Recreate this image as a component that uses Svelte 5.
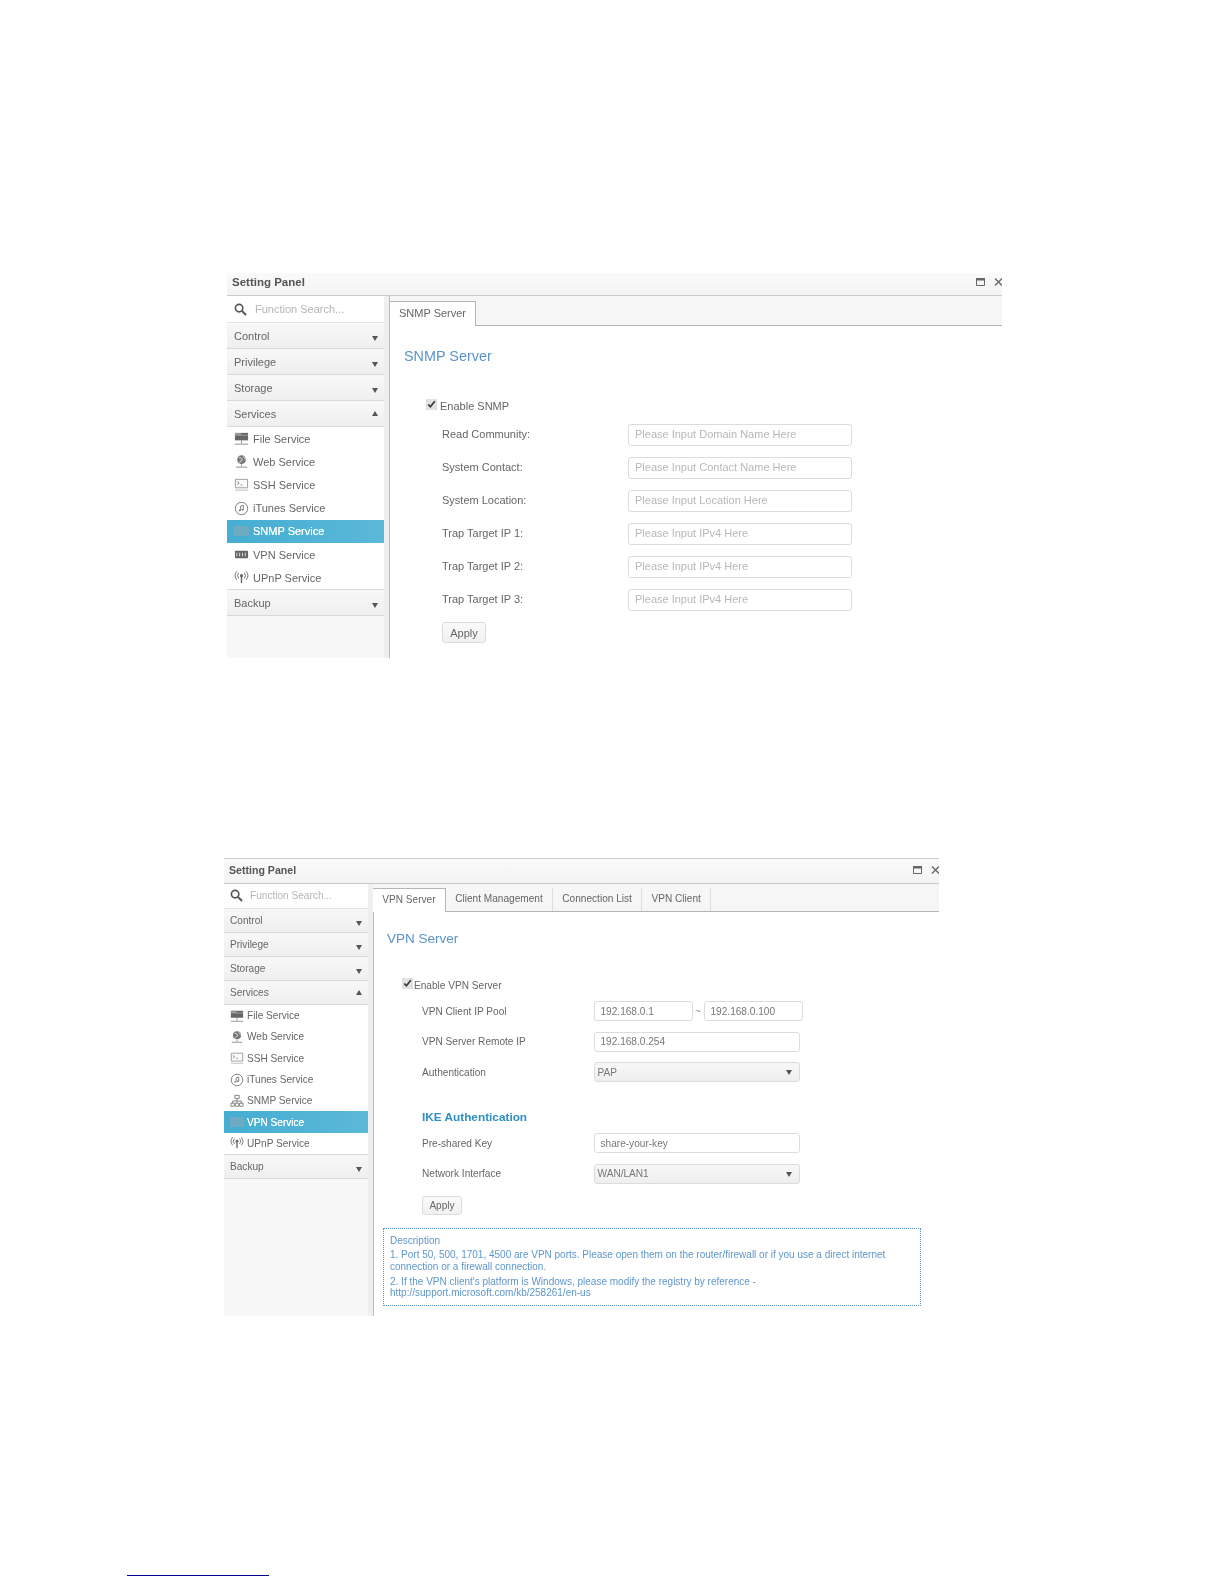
<script>
  const sections = ['Control', 'Privilege', 'Storage'];
  const services = [
    { name: 'File Service', icon: 'file' },
    { name: 'Web Service', icon: 'web' },
    { name: 'SSH Service', icon: 'ssh' },
    { name: 'iTunes Service', icon: 'itunes' },
    { name: 'SNMP Service', icon: 'snmp' },
    { name: 'VPN Service', icon: 'vpn' },
    { name: 'UPnP Service', icon: 'upnp' }
  ];
  const snmpFields = [
    { label: 'Read Community:', hint: 'Please Input Domain Name Here' },
    { label: 'System Contact:', hint: 'Please Input Contact Name Here' },
    { label: 'System Location:', hint: 'Please Input Location Here' },
    { label: 'Trap Target IP 1:', hint: 'Please Input IPv4 Here' },
    { label: 'Trap Target IP 2:', hint: 'Please Input IPv4 Here' },
    { label: 'Trap Target IP 3:', hint: 'Please Input IPv4 Here' }
  ];
</script>

{#snippet arrow(up = false)}
  <svg class="arrow" class:up viewBox="0 0 6 5" aria-hidden="true"><path d="M0 0h6L3 5z" /></svg>
{/snippet}

{#snippet icon(name)}
  <svg class="icon" viewBox="0 0 16 16" aria-hidden="true">
    {#if name === 'file'}
      <path d="M1 2h14v8H1z" fill="#666" />
      <path d="M1 2h6l1 2h7v1H1z" fill="#999" />
      <path d="M8 10v3M1 14h14" stroke="#888" fill="none" />
    {:else if name === 'web'}
      <circle cx="8" cy="6" r="4.6" fill="#777" />
      <path d="M5 3.5l3 1 1 2-2 1-1 2M10 2.5l1 2 1.5 1" stroke="#ddd" fill="none" />
      <path d="M8 11v2M2 14h12" stroke="#888" fill="none" />
    {:else if name === 'ssh'}
      <path d="M1.5 2.5h13v9h-13z" fill="#fafafa" stroke="#999" />
      <path d="M3.5 5l2 1.5-2 1.5M7 8.5h2" stroke="#888" fill="none" />
      <path d="M1 14h14" stroke="#bbb" />
    {:else if name === 'itunes'}
      <circle cx="8" cy="8" r="6.6" fill="none" stroke="#777" />
      <path d="M7 10V5.5l3-.8V9.3" fill="none" stroke="#777" />
      <circle cx="6" cy="10" r="1" fill="#777" />
      <circle cx="9" cy="9.4" r="1" fill="#777" />
    {:else if name === 'snmp'}
      <path d="M5.5 1.5h5v3.5h-5zM1 10.5h4V14H1zM6 10.5h4V14H6zM11 10.5h4V14h-4z" fill="none" stroke="#777" />
      <path d="M8 5v3M3 10.5V8h10v2.500M8 8v2.500" fill="none" stroke="#777" />
    {:else if name === 'vpn'}
      <rect x="1" y="4" width="14" height="8" rx="1" fill="#666" />
      <path d="M3 6v4M6 6v4M9 6v4M12 6v4" stroke="#ddd" />
    {:else if name === 'upnp'}
      <circle cx="8" cy="6" r="1.700" fill="#666" />
      <path d="M8 7v7" stroke="#666" stroke-width="1.500" />
      <path d="M5 3a4.500 4.500 0 0 0 0 6M11 3a4.500 4.500 0 0 1 0 6M3 1.500a7 7 0 0 0 0 9M13 1.500a7 7 0 0 1 0 9" fill="none" stroke="#666" />
    {/if}
  </svg>
{/snippet}

{#snippet frame(active, tabs, body)}
  <header class="titlebar">
    <span class="title">Setting Panel</span>
    <span class="winbtns">
      <svg class="winicon" viewBox="0 0 9 8" aria-hidden="true"><path d="M.5.500h8v7h-8z" fill="none" stroke="#666" /><path d="M0 0h9v2.500H0z" fill="#666" /></svg>
      <svg class="winicon" viewBox="0 0 8 8" aria-hidden="true"><path d="M.5.500l7 7M7.500.500l-7 7" stroke="#666" stroke-width="1.300" fill="none" /></svg>
    </span>
  </header>
  <div class="columns">
    <nav class="sidebar">
      <div class="search">
        <svg class="lens" viewBox="0 0 14 14" aria-hidden="true"><circle cx="5.500" cy="5.500" r="4" fill="none" stroke="#555" stroke-width="1.800" /><path d="M8.500 8.500l4.500 4.500" stroke="#555" stroke-width="2.200" /></svg>
        <span>Function Search...</span>
      </div>
      {#each sections as s}
        <div class="section">{s}{@render arrow()}</div>
      {/each}
      <div class="section">Services{@render arrow(true)}</div>
      <ul class="items">
        {#each services as item}
          <li class:active={item.name === active}>
            {#if item.name !== active}{@render icon(item.icon)}{:else}<span class="icon ghost"></span>{/if}
            {item.name}
          </li>
        {/each}
      </ul>
      <div class="section">Backup{@render arrow()}</div>
    </nav>
    <div class="divider"></div>
    <main class="content">
      <div class="tabs">
        {#each tabs as t, i}
          <span class="tab" class:current={i === 0}>{t}</span>
        {/each}
      </div>
      {@render body()}
    </main>
  </div>
{/snippet}

{#snippet snmpBody()}
  <h2>SNMP Server</h2>
  <label class="enable"><input type="checkbox" checked /> Enable SNMP</label>
  <div class="fields">
    {#each snmpFields as f}
      <div class="row">
        <span class="label">{f.label}</span>
        <input class="text" placeholder={f.hint} />
      </div>
    {/each}
  </div>
  <button class="apply">Apply</button>
{/snippet}

{#snippet vpnBody()}
  <h2>VPN Server</h2>
  <label class="enable"><input type="checkbox" checked /> Enable VPN Server</label>
  <div class="fields">
    <div class="row">
      <span class="label">VPN Client IP Pool</span>
      <div class="pool">
        <input class="text" value="192.168.0.1" />
        <span class="tilde">~</span>
        <input class="text" value="192.168.0.100" />
      </div>
    </div>
    <div class="row">
      <span class="label">VPN Server Remote IP</span>
      <input class="text" value="192.168.0.254" />
    </div>
    <div class="row">
      <span class="label">Authentication</span>
      <div class="select">PAP{@render arrow()}</div>
    </div>
  </div>
  <h3>IKE Authentication</h3>
  <div class="fields">
    <div class="row">
      <span class="label">Pre-shared Key</span>
      <input class="text" value="share-your-key" />
    </div>
    <div class="row">
      <span class="label">Network Interface</span>
      <div class="select">WAN/LAN1{@render arrow()}</div>
    </div>
  </div>
  <button class="apply">Apply</button>
  <div class="note">
    <p>Description</p>
    <p>1. Port 50, 500, 1701, 4500 are VPN ports. Please open them on the router/firewall or if you use a direct internet<br />connection or a firewall connection.</p>
    <p>2. If the VPN client's platform is Windows, please modify the registry by reference -<br />http://support.microsoft.com/kb/258261/en-us</p>
  </div>
{/snippet}

<div class="page">
  <section class="panel snmp">
    {@render frame('SNMP Service', ['SNMP Server'], snmpBody)}
  </section>
  <section class="panel vpn">
    {@render frame('VPN Service', ['VPN Server', 'Client Management', 'Connection List', 'VPN Client'], vpnBody)}
  </section>
  <div class="footnote-rule"></div>
</div>

<style>
  :global(body) {
    margin: 0;
    background: #fff;
  }

  .page {
    height: 1584px;
    padding-top: 273px;
    box-sizing: border-box;
    overflow: hidden;
    font-family: 'Liberation Sans', Arial, sans-serif;
    color: #666;
  }

  .panel {
    display: flex;
    flex-direction: column;
    overflow: hidden;
    filter: blur(0.5px);
  }

  .snmp {
    --title-h: 23px;
    --title-fs: 11.5px;
    --title-lift: 4px;
    --fs: 11px;
    --side-w: 157px;
    --side-pad: 7px;
    --search-h: 27px;
    --search-gap: 8px;
    --search-lift: 0px;
    --section-h: 26px;
    --item-h: 23.2px;
    --icon: 15px;
    --icon-gap: 4px;
    --tabs-h: 30px;
    --tab-h: 24px;
    --tab-pad: 9px;
    --tab-lift: 3px;
    --tab-shift: 0px;
    --field-h: 22px;
    --text-lift: 2px;
    width: 775px;
    height: 385px;
    margin-left: 227px;
  }

  .vpn {
    --title-h: 25px;
    --title-fs: 10.6px;
    --title-lift: 2px;
    --fs: 10.1px;
    --side-w: 144px;
    --side-pad: 6px;
    --search-h: 25px;
    --search-gap: 7px;
    --search-lift: 2px;
    --section-h: 24px;
    --item-h: 21.3px;
    --icon: 14px;
    --icon-gap: 3px;
    --tabs-h: 28px;
    --tab-h: 23px;
    --tab-pad: 9.300px;
    --tab-lift: 2px;
    --tab-shift: -1px;
    --field-h: 20px;
    --text-lift: 0px;
    width: 715px;
    height: 457px;
    margin-left: 224px;
    margin-top: 200px;
    border-top: 1px solid #ccc;
  }

  .titlebar {
    flex: none;
    height: var(--title-h);
    box-sizing: border-box;
    display: flex;
    align-items: center;
    justify-content: space-between;
    padding: 0 0 var(--title-lift) 5px;
    background: linear-gradient(#fafafa, #f3f3f3);
    border-bottom: 1px solid #c9c9c9;
  }

  .title {
    font-size: var(--title-fs);
    font-weight: 700;
    color: #555;
  }

  .winbtns {
    display: flex;
    align-items: center;
    gap: 9px;
    margin-right: -1px;
  }

  .winicon {
    width: 9px;
    height: 8px;
  }

  .columns {
    flex: 1;
    display: flex;
    min-height: 0;
  }

  .sidebar {
    flex: none;
    width: var(--side-w);
    background: #f7f7f7;
    font-size: var(--fs);
  }

  .search {
    height: var(--search-h);
    box-sizing: border-box;
    display: flex;
    align-items: center;
    gap: var(--search-gap);
    padding: 0 0 var(--search-lift) var(--side-pad);
    background: #fff;
    border-bottom: 1px solid #e4e4e4;
    color: #b5b5b5;
  }

  .lens {
    width: 13px;
    height: 13px;
  }

  .section {
    height: var(--section-h);
    box-sizing: border-box;
    display: flex;
    align-items: center;
    justify-content: space-between;
    padding: 0 6px 0 var(--side-pad);
    background: linear-gradient(#f8f8f8, #efefef);
    border-bottom: 1px solid #d9d9d9;
    color: #666;
  }

  .arrow {
    width: 6px;
    height: 5px;
    fill: #555;
    margin-top: 5px;
  }

  .arrow.up {
    transform: rotate(180deg);
    margin-top: 0;
  }

  .items {
    list-style: none;
    margin: 0;
    padding: 0;
    background: #fff;
    border-bottom: 1px solid #d9d9d9;
  }

  .items li {
    height: var(--item-h);
    display: flex;
    align-items: center;
    gap: var(--icon-gap);
    padding-left: var(--side-pad);
    color: #666;
  }

  .items li.active {
    background: linear-gradient(90deg, #45aed2, #5bb8d8);
    color: #fff;
    text-shadow: 0 0 0.6px #fff;
  }

  .icon {
    flex: none;
    width: var(--icon);
    height: var(--icon);
  }

  .ghost {
    height: 10px;
    background: #78a9bd;
    opacity: 0.8;
  }

  .divider {
    flex: none;
    width: 6px;
    box-sizing: border-box;
    background: #efefef;
    border-right: 1px solid #bdbdbd;
  }

  .content {
    flex: 1;
    min-width: 0;
    background: #fff;
    font-size: var(--fs);
  }

  .tabs {
    height: var(--tabs-h);
    box-sizing: border-box;
    display: flex;
    align-items: flex-end;
    padding-left: 0;
    margin-left: var(--tab-shift);
    background: #f6f6f6;
    border-bottom: 1px solid #b5b5b5;
  }

  .tab {
    height: var(--tab-h);
    box-sizing: border-box;
    display: flex;
    align-items: center;
    padding: 0 var(--tab-pad) var(--tab-lift);
    border-right: 1px solid #ddd;
    color: #666;
    white-space: nowrap;
  }

  .tab.current {
    height: calc(var(--tab-h) + 1px);
    margin-bottom: -1px;
    background: #fff;
    border: 1px solid #b5b5b5;
    border-bottom: none;
    border-left: none;
  }

  h2 {
    margin: 0;
    font-weight: 400;
    color: #5b93c9;
  }

  h3 {
    margin: 0;
    font-size: 11.800px;
    font-weight: 700;
    color: #2f8fc4;
  }

  .enable {
    display: flex;
    align-items: center;
    color: #666;
  }

  .enable input {
    margin: 0 0 4px;
    width: 11px;
    height: 11px;
    accent-color: #e2e2e2;
  }

  .row {
    display: grid;
    align-items: center;
  }

  .label {
    padding-bottom: var(--text-lift);
  }

  .text,
  .select {
    box-sizing: border-box;
    height: var(--field-h);
    min-width: 0;
    border: 1px solid #dcdcdc;
    border-radius: 3px;
    font: inherit;
    color: #777;
    outline: none;
  }

  .text {
    width: 100%;
    padding: 0 6px var(--text-lift);
    background: #fff;
  }

  .text::placeholder {
    color: #b8b8b8;
    opacity: 1;
  }

  .select {
    display: flex;
    align-items: center;
    justify-content: space-between;
    padding: 0 7px 0 3px;
    background: linear-gradient(#f7f7f7, #efefef);
  }

  .select .arrow {
    margin-top: 1px;
  }

  .apply {
    display: block;
    box-sizing: border-box;
    padding: 0;
    border: 1px solid #dcdcdc;
    border-radius: 3px;
    background: linear-gradient(#fafafa, #f0f0f0);
    font: inherit;
    color: #666;
  }

  /* SNMP panel spacing */
  .snmp h2 {
    font-size: 14.400px;
    padding: 22px 0 0 14px;
    line-height: 17px;
  }

  .snmp .enable {
    margin: 34px 0 0 36px;
    height: 14px;
    gap: 3px;
  }

  .snmp .fields {
    display: flex;
    flex-direction: column;
    gap: 11px;
    margin: 11px 0 0 52px;
  }

  .snmp .row {
    grid-template-columns: 186px 224px;
  }

  .snmp .apply {
    width: 44px;
    height: 21px;
    margin: 11px 0 0 52px;
  }

  /* VPN panel spacing */
  .vpn h2 {
    font-size: 13.500px;
    padding: 19px 0 0 13px;
    line-height: 16px;
  }

  .vpn .enable {
    margin: 32px 0 0 28px;
    height: 12px;
    gap: 1px;
  }

  .vpn h3 {
    margin: 28px 0 0 48px;
    line-height: 14px;
  }

  .vpn .fields {
    display: flex;
    flex-direction: column;
    gap: 10.500px;
    margin: 10px 0 0 48px;
  }

  .vpn .row {
    grid-template-columns: 171.500px 206px;
  }

  .vpn .fields + h3 + .fields {
    margin-top: 9px;
  }

  .pool {
    display: grid;
    grid-template-columns: 99px 11px 99px;
    align-items: center;
    width: 209px;
    text-align: center;
  }

  .tilde {
    color: #999;
  }

  .vpn .apply {
    width: 40px;
    height: 19px;
    margin: 12px 0 0 48px;
  }

  .note {
    width: 538px;
    height: 78px;
    box-sizing: border-box;
    margin: 13px 0 0 9px;
    padding: 6px 6px 0;
    border: 1px dotted #5b93c9;
    font-size: 10px;
    color: #5f97cc;
  }

  .note p {
    margin: 0 0 3px;
    line-height: 11.700px;
  }

  .footnote-rule {
    width: 142px;
    height: 1px;
    margin: 259px 0 0 127px;
    background: #000090;
  }
</style>
